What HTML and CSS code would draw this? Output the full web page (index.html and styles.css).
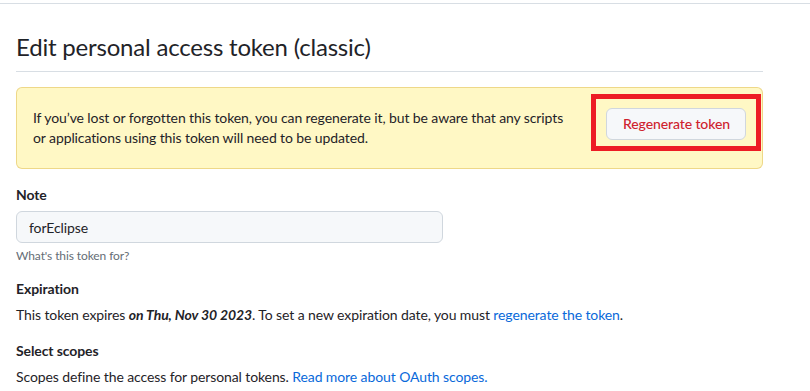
FILE: index.html
```html
<!DOCTYPE html>
<html lang="en">
<head>
  <meta charset="UTF-8">
  <meta name="viewport" content="width=device-width, initial-scale=1.0">
  <title>Edit personal access token (classic)</title>
  <link rel="stylesheet" href="styles.css">
</head>
<body>
  <div class="top-rule"></div>

  <div class="container">
    <div class="subhead">
      <h2 class="subhead-heading">Edit personal access token (classic)</h2>
    </div>

    <div class="flash flash-warn">
      <div class="flash-action">
        <button class="btn btn-danger" type="button">Regenerate token</button>
        <span class="callout-box"></span>
      </div>
      <p class="flash-text">
        If you’ve lost or forgotten this token, you can regenerate it, but be aware that any scripts<br>
        or applications using this token will need to be updated.
      </p>
    </div>

    <div class="form-group">
      <label class="form-label" for="oauth_access_description">Note</label>
      <input class="form-control" id="oauth_access_description" type="text" value="forEclipse">
      <p class="note">What's this token for?</p>
    </div>

    <div class="form-group form-group-tight">
      <h3 class="form-label">Expiration</h3>
      <p class="text">This token expires <strong><em>on Thu, Nov 30 2023</em></strong>. To set a new expiration date, you must <a href="#">regenerate the token</a>.</p>
    </div>

    <div class="form-group">
      <h3 class="form-label">Select scopes</h3>
      <p class="text">Scopes define the access for personal tokens. <a href="#">Read more about OAuth scopes.</a></p>
    </div>
  </div>
</body>
</html>
```

FILE: styles.css
```css
* {
  box-sizing: border-box;
  margin: 0;
  padding: 0;
}

body {
  background: #ffffff;
  color: #1f2328;
  font-family: 'Lato', 'Open Sans', sans-serif;
  font-size: 14px;
  line-height: 20px;
  letter-spacing: -0.1px;
  overflow: hidden;
}

a {
  color: #0969da;
  text-decoration: none;
}

.top-rule {
  height: 4px;
  border-bottom: 1px solid #d8dee4;
}

.container {
  width: 747px;
  margin-left: 16px;
}

/* Page heading */
.subhead {
  padding-top: 25px;
  padding-bottom: 6px;
  border-bottom: 1px solid #d8dee4;
  margin-bottom: 15px;
}

.subhead-heading {
  font-size: 24px;
  font-weight: 400;
  line-height: 36px;
  letter-spacing: -0.2px;
}

/* Warning flash */
.flash {
  display: flex;
  flex-direction: row-reverse;
  justify-content: space-between;
  padding: 20px 16px;
  border: 1px solid rgba(212, 167, 44, 0.4);
  border-radius: 6px;
}

.flash-warn {
  background: #fff8c5;
}

.flash-action {
  position: relative;
  flex-shrink: 0;
  align-self: flex-start;
}

.btn {
  display: block;
  font-family: inherit;
  font-size: 14px;
  font-weight: 500;
  line-height: 20px;
  letter-spacing: inherit;
  white-space: nowrap;
  padding: 5px 16px;
  height: 32px;
  width: 140px;
  background: #f6f8fa;
  border: 1px solid #d0d7de;
  border-radius: 6px;
  cursor: pointer;
}

.btn-danger {
  color: #cf222e;
}

/* red annotation frame drawn over the screenshot */
.callout-box {
  position: absolute;
  top: -14px;
  left: -15px;
  right: -15px;
  bottom: -11px;
  border: 5px solid #ed1c24;
  pointer-events: none;
}

/* Form */
.form-group {
  margin-top: 16px;
}

.form-group-tight {
  margin-top: 14px;
}

.form-label {
  display: block;
  font-size: 14px;
  font-weight: 700;
  line-height: 20px;
  margin-bottom: 6px;
}

.form-control {
  display: block;
  width: 427px;
  height: 32px;
  padding: 5px 12px;
  font-family: inherit;
  font-size: 14px;
  line-height: 20px;
  letter-spacing: inherit;
  color: #1f2328;
  background: #f6f8fa;
  border: 1px solid #d0d7de;
  border-radius: 6px;
}

.note {
  margin-top: 4px;
  font-size: 12px;
  line-height: 18px;
  color: #656d76;
}

.text {
  color: #1f2328;
}
```
